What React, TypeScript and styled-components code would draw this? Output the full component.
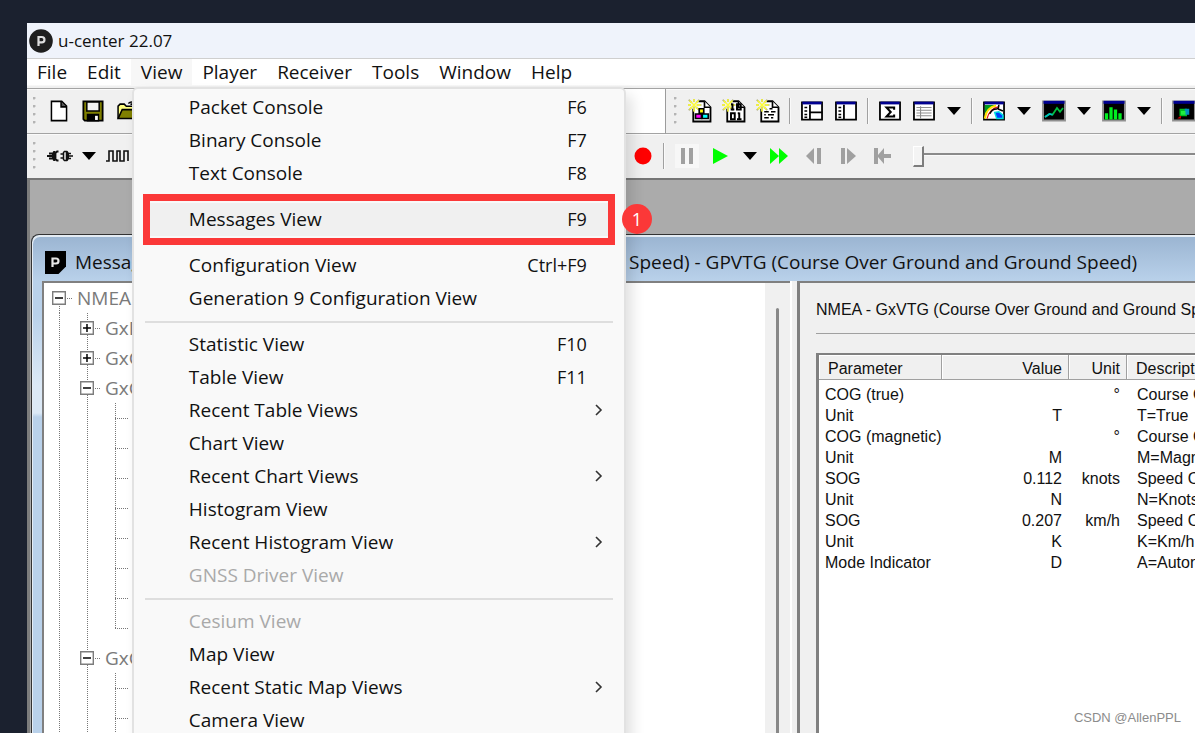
import React from "react";
import styled, { createGlobalStyle } from "styled-components";

const uiFont = `"Open Sans", "Noto Sans", "Liberation Sans", sans-serif`;
const dialogFont = `"Liberation Sans", Arial, sans-serif`;

const GlobalStyle = createGlobalStyle`
  *, *::before, *::after { box-sizing: border-box; }
  body { margin: 0; background: #1b212f; color: #111; font-family: ${uiFont}; }
  button { margin: 0; padding: 0; border: 0; background: none; color: inherit; font: inherit; }
  svg { display: block; flex: none; }
`;

const Desktop = styled.main`
  position: relative;
  display: flex;
  height: 100vh;
  padding: 23px 0 0 27px;
  overflow: hidden;
  background: #1b212f;
`;

const AppWindow = styled.section`
  display: flex;
  flex: 1;
  flex-direction: column;
  min-width: 0;
  background: #f0f0f0;
`;

const TitleBar = styled.header`
  display: flex;
  flex: none;
  align-items: center;
  gap: 5px;
  height: 36px;
  padding-left: 2px;
  border-bottom: 1px solid #cfcfcf;
  background: #eff3fb;
`;

const AppTitle = styled.h1`
  margin: 0;
  font-size: 17px;
  font-weight: 400;
  line-height: 24px;
`;

const MenuBar = styled.nav`
  display: flex;
  flex: none;
  height: 30px;
  border-bottom: 1px solid #a3a3a3;
  background: linear-gradient(#fff 26px, #f0f0f0 27px);
`;

const MenuSlot = styled.div`
  position: relative;
`;

const MenuButton = styled.button<{ $open?: boolean }>`
  height: 27px;
  padding: 0 10px 2px;
  background: ${(p) => (p.$open ? "#f7f7f7" : "transparent")};
  font-size: 19px;
  line-height: 24px;
  white-space: nowrap;
`;

const Dropdown = styled.div`
  position: absolute;
  z-index: 5;
  top: 28px;
  left: 1px;
  width: 494px;
  padding: 2px 11px 8px;
  border: 2px solid #e2e2e2;
  border-radius: 6px;
  background: #f9f9f9;
  box-shadow: 6px 8px 14px rgba(0, 0, 0, 0.12);
`;

const MenuItem = styled.button<{ $active?: boolean }>`
  position: relative;
  display: grid;
  grid-template-columns: 1fr auto 26px;
  align-items: center;
  width: 100%;
  height: 33px;
  padding-left: 44px;
  padding-bottom: 2px;
  border-radius: 4px;
  background: ${(p) => (p.$active ? "#f0f0f0" : "transparent")};
  font-size: 19px;
  line-height: 24px;
  text-align: left;
  white-space: nowrap;

  &:disabled { color: #a9a9a9; }
`;

const Shortcut = styled.span`
  font-size: 18px;
`;

const ChevronCell = styled.span`
  display: flex;
  grid-column: 3;
  justify-content: center;
`;

const MenuSeparator = styled.hr`
  height: 2px;
  margin: 6px 0 5px;
  border: 0;
  background: #dedede;
`;

const Callout = styled.span`
  position: absolute;
  inset: -9px -2px;
  border: 7px solid #fb3838;
`;

const CalloutNumber = styled.span`
  position: absolute;
  top: 1px;
  right: -39px;
  width: 30px;
  height: 30px;
  border-radius: 50%;
  background: #fb3838;
  color: #fff;
  font-size: 18px;
  line-height: 30px;
  text-align: center;
`;

const ToolRow = styled.div`
  display: flex;
  flex: none;
  height: 45px;
  background: #f0f0f0;
  box-shadow: inset 0 1px 0 #fafafa;

  & + & { height: 44px; }
`;

const ToolBand = styled.div<{ $width?: number; $divided?: boolean }>`
  display: flex;
  flex: ${(p) => (p.$width ? `0 0 ${p.$width}px` : "1 0 auto")};
  align-items: center;
  border-left: ${(p) => (p.$divided ? "1px solid #9c9c9c" : "0")};
  border-bottom: 1px solid #a3a3a3;

  ${ToolRow} + ${ToolRow} & { border-bottom: 0; }
`;

const Grip = styled.span`
  flex: none;
  width: 3px;
  height: 28px;
  margin: 0 12px 0 6px;
  background: radial-gradient(circle at 1px 1px, #b4b4b4 1px, transparent 2px) 0 0 / 3px 8px;
`;

const BandGrip = styled(Grip)`
  margin: 0 12px 0 8px;
`;

const ToolGroup = styled.div<{ $gap: number }>`
  display: flex;
  flex: none;
  align-items: center;
  gap: ${(p) => p.$gap}px;
`;

const ToolButton = styled.button<{ $width?: number; $dither?: boolean }>`
  display: flex;
  flex: none;
  align-items: center;
  justify-content: center;
  width: ${(p) => p.$width ?? 22}px;
  height: 24px;
  background: ${(p) => (p.$dither ? "#f7f7f7" : "transparent")};
`;

const ToolDivider = styled.span`
  flex: none;
  width: 2px;
  height: 26px;
  margin: 0 10px;
  border-left: 1px solid #a0a0a0;
  border-right: 1px solid #fafafa;
`;

const ComboArea = styled.div`
  flex: 1;
  align-self: stretch;
  margin-left: 12px;
  background: #fff;
`;

const Spacer = styled.div`
  flex: 1;
`;

const Position = styled.input`
  flex: 1;
  min-width: 120px;
  height: 22px;
  margin: 0 0 0 20px;
  appearance: none;
  background: linear-gradient(transparent 8px, #8a8a8a 8px, #8a8a8a 10px, #fafafa 10px, #fafafa 11px, transparent 11px);

  &::-webkit-slider-thumb {
    appearance: none;
    width: 11px;
    height: 21px;
    border: 1px solid #fff;
    border-right: 2px solid #7d7d7d;
    border-bottom: 2px solid #7d7d7d;
    background: #f4f4f4;
  }
`;

const Workspace = styled.div`
  display: flex;
  flex: 1;
  min-height: 0;
  padding-top: 54px;
  padding-left: 1px;
  border-top: 2px solid #757575;
  border-left: 3px solid #7c7c7c;
  background: #ababab;
`;

const ChildWindow = styled.section`
  display: flex;
  flex: 1;
  flex-direction: column;
  min-width: 0;
  padding: 0 0 0 10px;
  border: 0 solid #333;
  border-width: 1px 0 0 1px;
  border-top-left-radius: 8px;
  background: linear-gradient(#9ab4d1 0, #b9d1ea 46px, #b9d1ea 80px, #dce9f6 150px, #dce9f6 178px, #b9d1ea 182px);
  box-shadow: inset 1px 2px 0 #e4ecf4;
`;

const ChildTitleBar = styled.header`
  display: flex;
  flex: none;
  align-items: center;
  gap: 9px;
  height: 46px;
  padding: 8px 0 0 3px;
`;

const ChildTitle = styled.h2`
  display: flex;
  gap: 17px;
  margin: 0;
  font-size: 19px;
  font-weight: 400;
  line-height: 24px;
  white-space: nowrap;
`;

const Split = styled.div`
  display: flex;
  flex: 1;
  min-height: 0;
  background: #f0f0f0;
`;

const TreePane = styled.div`
  display: flex;
  flex: 0 0 748px;
  border-top: 2px solid #808080;
  border-left: 2px solid #808080;
  background: #fff;
  overflow: hidden;
`;

const Tree = styled.ul`
  flex: 1;
  margin: 0;
  padding: 0 0 0 1px;
  list-style: none;
`;

const TreeRow = styled.li`
  display: flex;
  align-items: center;
  height: 30px;
  color: #7a7a7a;
  font-size: 19px;
  line-height: 24px;
`;

const Guide = styled.span<{ $from?: string; $to?: string; $tick?: boolean }>`
  position: relative;
  display: flex;
  align-items: center;
  justify-content: center;
  width: 28px;
  height: 30px;
  margin-right: ${(p) => (p.$tick ? "4px" : "0")};

  &::before {
    content: "";
    position: absolute;
    top: ${(p) => p.$from ?? "0"};
    bottom: ${(p) => p.$to ?? "0"};
    left: 14px;
    width: 1px;
    background: repeating-linear-gradient(#777 0 1px, transparent 1px 2px);
  }

  &::after {
    content: "";
    position: absolute;
    top: 15px;
    left: 14px;
    right: 0;
    height: 1px;
    background: ${(p) =>
      p.$tick ? "repeating-linear-gradient(90deg, #777 0 1px, transparent 1px 2px)" : "none"};
  }
`;

const Toggle = styled.button`
  position: relative;
  z-index: 1;
`;

const ScrollTrack = styled.div`
  width: 25px;
  padding: 25px 11px 0;
  background: #f0f0f0;
`;

const ScrollThumb = styled.div`
  width: 3px;
  height: 100%;
  border-radius: 2px 2px 0 0;
  background: #888;
`;

const Splitter = styled.div`
  flex: none;
  width: 7px;
  border-left: 2px solid #fff;
`;

const DetailPane = styled.article`
  flex: 1;
  min-width: 0;
  display: flex;
  flex-direction: column;
  padding: 15px 0 0 16px;
  border-top: 2px solid #808080;
  border-left: 3px solid #808080;
  overflow: hidden;
  font-family: ${dialogFont};
`;

const DetailHeading = styled.h3`
  margin: 0;
  padding-bottom: 11px;
  border-bottom: 1px solid #a0a0a0;
  font-size: 16px;
  font-weight: 400;
  line-height: 24px;
  white-space: nowrap;
`;

const ListView = styled.div`
  flex: 1;
  margin-top: 19px;
  border-top: 2px solid #808080;
  border-left: 3px solid #808080;
  background: #fff;
  overflow: hidden;
`;

const DataTable = styled.table`
  width: 520px;
  border-collapse: separate;
  border-spacing: 0;
  table-layout: fixed;
  font-size: 16px;
  line-height: 21px;

  th {
    height: 25px;
    padding: 2px 6px 0 9px;
    border-right: 1px solid #a0a0a0;
    border-bottom: 1px solid #a0a0a0;
    background: #f0f0f0;
    box-shadow: inset 1px 1px 0 #fff;
    font-weight: 400;
    white-space: nowrap;
  }
  td { padding: 0 7px 0 6px; white-space: nowrap; }
  td:last-child { padding-left: 10px; }
  tbody::before { content: ""; display: block; height: 4px; }
`;

const HeadCell = styled.th<{ $end?: boolean }>`
  text-align: ${(p) => (p.$end ? "right" : "left")};
`;

const DataCell = styled.td<{ $end?: boolean }>`
  text-align: ${(p) => (p.$end ? "right" : "left")};
`;

const Watermark = styled.span`
  position: absolute;
  right: 14px;
  bottom: 6px;
  color: #8c8c8c;
  font-family: ${dialogFont};
  font-size: 13px;
  line-height: 18px;
`;

/* ---------- icons, drawn on a 16 unit pixel grid ---------- */

const Pix = ({ size = 22, children }: { size?: number; children: React.ReactNode }) => (
  <svg width={size} height={size} viewBox="0 0 16 16" fill="none" stroke="#000" strokeWidth="1.1" aria-hidden="true">
    {children}
  </svg>
);

const NewIcon = () => (
  <Pix>
    <path d="M2.500 1h7.500l3.500 3.500v10.500h-11z" fill="#fff" strokeWidth="1.100" />
    <path d="M9.500 1v4h4" fill="#555" />
  </Pix>
);

const SaveIcon = () => (
  <Pix>
    <path d="M1 1h14v14H2l-1-1z" fill="#808000" strokeWidth="1.300" />
    <path d="M3.500 1.500h9v6.500h-9z" fill="#f2f2f2" />
    <path d="M4 10.500h8V15H4z" fill="#000" />
    <path d="M9.500 11.500h2V14.500h-2z" fill="#fff" stroke="none" />
  </Pix>
);

const OpenIcon = () => (
  <Pix>
    <path d="M1.500 13.500v-9l1.500-1.500h3l1.500 1.500h5v2.500" fill="#ffff80" />
    <path d="M1.500 13.500l3-6.500h11l-3.500 6.500z" fill="#808000" />
    <path d="M9 2.500c1.500-1.500 3-1.500 4.500 0M13.500 0v3h-3" />
  </Pix>
);

const PlugIcon = () => (
  <svg width="26" height="16" viewBox="0 0 26 16" fill="none" stroke="#111" strokeWidth="1.800" aria-hidden="true">
    <path d="M0 8h5M2 5.500h3M2 10.500h3M11.500 3.500H10L8.500 5v6l1.500 1.500h1.500" />
    <path d="M8.500 3h-2L5 5v6l1.500 2h2z" fill="#111" stroke="none" />
    <path d="M16.500 4.500l1-1h2v9h-2l-1-1zM13.500 6h3M13.500 10h3M22 5.500h2M22 10.500h2M22 8h4" strokeWidth="1.500" />
    <path d="M19 3h1.500L22 5v6l-1.500 2H19z" fill="#111" stroke="none" />
  </svg>
);

const WaveIcon = () => (
  <svg width="24" height="14" viewBox="0 0 24 14" fill="none" stroke="#111" strokeWidth="1.600" aria-hidden="true">
    <path d="M0 12h3V2h4v10h4V2h3v10h4V2h4v10" />
  </svg>
);

const ArrowDown = () => (
  <svg width="14" height="8" viewBox="0 0 14 8" aria-hidden="true">
    <path d="M0 0h14L7 8z" fill="#000" />
  </svg>
);

const SparkPage = ({ children }: { children: React.ReactNode }) => (
  <Pix size={24}>
    <path d="M3.500 1.500h7.500l4 4v9.500h-11.500z" fill="#fff" strokeWidth="1.200" />
    <path d="M11 1.500v4h4" fill="#fff" />
    <path d="M-.5-.5h7.500v7h-7.500z" fill="#f0f0f0" stroke="none" />
    <path d="M4 0v2M4 5v3M0 4h2M6 4h3M0.500 0.500l2 2M7.500 0.500l-2 2M0.500 7.500l2-2M7.500 7.500l-2-2" stroke="#a8a878" strokeWidth="1.100" />
    <path d="M4 0v2M4 5.500v3M0 4h2M5.500 4h3M1 1l6 6M7 1L1 7" stroke="#ffff30" strokeWidth=".9" />
    {children}
  </Pix>
);

const PacketIcon = () => (
  <SparkPage>
    <path d="M7.500 6.500h3v3h-3z" fill="#ffff00" />
    <path d="M5 10h4v3H5z" fill="#ff00ff" />
    <path d="M9.500 10h4v3h-4z" fill="#00ffff" />
  </SparkPage>
);

const BinaryIcon = () => (
  <SparkPage>
    <path d="M7 3v4M6 3.500h1M5.800 7h2.400M10 3.500h2.500v3.500H10zM6 9.500h2.500v4H6zM11.500 9v4.500M10.500 9.500h1M10 13.500h3" strokeWidth="1.300" />
  </SparkPage>
);

const TextIcon = () => (
  <SparkPage>
    <path d="M5.500 8.500h3M10 8.500h3M5.500 10.500h1M8 10.500h4M5.500 12.500h3M10 12.500h1.500M9 6.500h2" />
  </SparkPage>
);

const PaneFrame = ({ size, fill = "#fff", frame = "#000", children }: { size?: number; fill?: string; frame?: string; children?: React.ReactNode }) => (
  <Pix size={size}>
    <path d="M.7 1.700h14.600v12.600H.7z" fill={fill} stroke={frame} strokeWidth="1.300" />
    <path d="M1 1.200h14v2H1z" fill="#000090" stroke="none" />
    {children}
  </Pix>
);

const PanesIcon = () => (
  <PaneFrame>
    <path d="M6.500 3.500v11M6.500 9h9" strokeWidth="1.300" />
    <path d="M2.500 5.500h2M2.500 8h2M2.500 10.500h2M2.500 12.500h2" />
  </PaneFrame>
);

const SidePaneIcon = () => (
  <PaneFrame>
    <path d="M6.500 3.500v11" strokeWidth="1.300" />
    <path d="M2.500 5.500h2M2.500 8h2M2.500 10.500h2M2.500 12.500h2" />
  </PaneFrame>
);

const SigmaIcon = () => (
  <PaneFrame>
    <path d="M11 7V5.500H5.500L8.500 8.700 5.500 12H11v-1.500" strokeWidth="1.500" />
  </PaneFrame>
);

const TableIcon = () => (
  <PaneFrame>
    <path d="M2.500 5.500h11M2.500 7.500h11M2.500 9.500h11M2.500 11.500h11M5.500 4.500v9" stroke="#8f8f8f" strokeWidth=".8" />
  </PaneFrame>
);

const MapIcon = () => (
  <PaneFrame>
    <path d="M1.300 3.600h7L1.300 10z" fill="#009a20" stroke="none" />
    <path d="M1.300 13.600C2 8 5 5 9.500 4" stroke="#ffe000" strokeWidth="1.600" />
    <path d="M3 13.600C4 9 6.500 6 11 5" stroke="#e01010" strokeWidth=".9" />
    <path d="M5 10c1-2.500 3-3.500 5-3.500 1 0 1.500-1 1.500-3M11 6.500l3.500 1.500" />
    <path d="M8.500 9l3-.5 3 2.500v2.500H10z" fill="#0040ff" stroke="#00e0e0" />
  </PaneFrame>
);

const ChartIcon = () => (
  <PaneFrame size={24} fill="#000" frame="#909090">
    <path d="M2 12l3-2 2 .5L10 6l2 2.500L14 6" stroke="#00c040" strokeWidth="1.200" />
    <path d="M2 12l3-2 2 .5" stroke="#00c0c0" strokeWidth="1.200" />
  </PaneFrame>
);

const HistogramIcon = () => (
  <PaneFrame size={24} fill="#000" frame="#909090">
    <path d="M3 13.600V9.500M6 13.600V5.500M9 13.600V7M12 13.600V9.500" stroke="#00f020" strokeWidth="2.200" />
  </PaneFrame>
);

const SkyIcon = () => (
  <PaneFrame size={24} fill="#000" frame="#909090">
    <path d="M5 6.500h5v5H5z" fill="#00c020" stroke="none" />
    <path d="M8.500 6.500h3v4h-3z" fill="#0090c0" stroke="none" />
    <path d="M6 8h3v2.500H6z" fill="#20f040" stroke="none" />
    <path d="M3.500 13h2.500v-2z" fill="#d00000" stroke="none" />
  </PaneFrame>
);

const Glyph = ({ d, fill, circle }: { d?: string; fill: string; circle?: boolean }) => (
  <svg width="20" height="20" viewBox="0 0 20 20" fill={fill} aria-hidden="true">
    {circle ? <circle cx="10" cy="10" r="8.500" /> : <path d={d} />}
  </svg>
);

const Chevron = () => (
  <svg width="10" height="14" viewBox="0 0 10 14" fill="none" stroke="#333" strokeWidth="1.600" aria-hidden="true">
    <path d="M1 2l5 5-5 5" />
  </svg>
);

const AppLogo = () => (
  <svg width="24" height="24" viewBox="0 0 24 24" aria-hidden="true">
    <circle cx="12" cy="12" r="11.800" fill="#1f1f1f" />
    <path d="M9.500 17V8h3.300a2.600 2.600 0 0 1 0 5.300H9.500" fill="none" stroke="#ddd" strokeWidth="2.200" />
  </svg>
);

const ChildLogo = () => (
  <svg width="21" height="23" viewBox="0 0 21 23" aria-hidden="true">
    <path d="M0 0h21v15.500L13.500 23H0z" fill="#000" />
    <path d="M7.500 16V7.500h3.500a2.400 2.400 0 0 1 0 5H7.500" fill="none" stroke="#e6e6e6" strokeWidth="2.200" />
  </svg>
);

const ToggleBox = ({ open }: { open: boolean }) => (
  <svg width="14" height="14" viewBox="0 0 14 14" fill="#fff" aria-hidden="true">
    <path d="M.7.7h12.600v12.600H.7z" stroke="#7c7c7c" strokeWidth="1.400" />
    <path d={open ? "M3 7h8" : "M3 7h8M7 3v8"} stroke="#000" strokeWidth="1.500" />
  </svg>
);

/* ---------- data ---------- */

type Entry = { label: string; keys?: string; sub?: boolean; disabled?: boolean; marked?: boolean } | null;

const viewMenu: Entry[] = [
  { label: "Packet Console", keys: "F6" },
  { label: "Binary Console", keys: "F7" },
  { label: "Text Console", keys: "F8" },
  null,
  { label: "Messages View", keys: "F9", marked: true },
  null,
  { label: "Configuration View", keys: "Ctrl+F9" },
  { label: "Generation 9 Configuration View" },
  null,
  { label: "Statistic View", keys: "F10" },
  { label: "Table View", keys: "F11" },
  { label: "Recent Table Views", sub: true },
  { label: "Chart View" },
  { label: "Recent Chart Views", sub: true },
  { label: "Histogram View" },
  { label: "Recent Histogram View", sub: true },
  { label: "GNSS Driver View", disabled: true },
  null,
  { label: "Cesium View", disabled: true },
  { label: "Map View" },
  { label: "Recent Static Map Views", sub: true },
  { label: "Camera View" },
];

const menus = ["File", "Edit", "View", "Player", "Receiver", "Tools", "Window", "Help"];

const treeNodes = [
  { label: "GxDTM", open: false, leaves: 0 },
  { label: "GxGBS", open: false, leaves: 0 },
  { label: "GxGGA", open: true, leaves: 8 },
  { label: "GxGLL", open: true, leaves: 4 },
];

const fields = [
  ["COG (true)", "", "°", "Course Over Ground (true)"],
  ["Unit", "T", "", "T=True"],
  ["COG (magnetic)", "", "°", "Course Over Ground (magnetic)"],
  ["Unit", "M", "", "M=Magnetic"],
  ["SOG", "0.112", "knots", "Speed Over Ground"],
  ["Unit", "N", "", "N=Knots"],
  ["SOG", "0.207", "km/h", "Speed Over Ground"],
  ["Unit", "K", "", "K=Km/h"],
  ["Mode Indicator", "D", "", "A=Autonomous"],
];

/* ---------- parts ---------- */

const ViewDropdown = () => (
  <Dropdown role="menu" aria-label="View">
    {viewMenu.map((entry, i) =>
      entry === null ? (
        <MenuSeparator key={i} />
      ) : (
        <MenuItem key={i} role="menuitem" disabled={entry.disabled} $active={entry.marked}>
          <span>{entry.label}</span>
          {entry.keys && <Shortcut>{entry.keys}</Shortcut>}
          {entry.sub && (
            <ChevronCell>
              <Chevron />
            </ChevronCell>
          )}
          {entry.marked && (
            <>
              <Callout />
              <CalloutNumber>1</CalloutNumber>
            </>
          )}
        </MenuItem>
      ),
    )}
  </Dropdown>
);

const Tool = ({ name, width, dither, children }: { name: string; width?: number; dither?: boolean; children: React.ReactNode }) => (
  <ToolButton aria-label={name} $width={width} $dither={dither}>
    {children}
  </ToolButton>
);

const SplitTool = ({ name, children }: { name: string; children: React.ReactNode }) => (
  <ToolGroup $gap={12}>
    <Tool name={name}>{children}</Tool>
    <Tool name={`${name} options`} width={14}>
      <ArrowDown />
    </Tool>
  </ToolGroup>
);

const Toolbars = () => (
  <>
    <ToolRow>
      <ToolBand $width={638}>
        <Grip />
        <ToolGroup $gap={12}>
          <Tool name="New"><NewIcon /></Tool>
          <Tool name="Save"><SaveIcon /></Tool>
          <Tool name="Open"><OpenIcon /></Tool>
        </ToolGroup>
        <ComboArea />
      </ToolBand>
      <ToolBand $divided>
        <BandGrip />
        <ToolGroup $gap={12}>
          <Tool name="Packet Console"><PacketIcon /></Tool>
          <Tool name="Binary Console"><BinaryIcon /></Tool>
          <Tool name="Text Console"><TextIcon /></Tool>
        </ToolGroup>
        <ToolDivider />
        <ToolGroup $gap={12}>
          <Tool name="Messages View"><PanesIcon /></Tool>
          <Tool name="Configuration View"><SidePaneIcon /></Tool>
        </ToolGroup>
        <ToolDivider />
        <ToolGroup $gap={12}>
          <Tool name="Statistic View"><SigmaIcon /></Tool>
          <SplitTool name="Table View"><TableIcon /></SplitTool>
        </ToolGroup>
        <ToolDivider />
        <ToolGroup $gap={12}>
          <SplitTool name="Map View"><MapIcon /></SplitTool>
          <SplitTool name="Chart View"><ChartIcon /></SplitTool>
          <SplitTool name="Histogram View"><HistogramIcon /></SplitTool>
        </ToolGroup>
        <ToolDivider />
        <Tool name="Sky View"><SkyIcon /></Tool>
      </ToolBand>
    </ToolRow>
    <ToolRow>
      <ToolBand $width={606}>
        <Grip />
        <ToolGroup $gap={10}>
          <Tool name="Connect" width={24}><PlugIcon /></Tool>
          <Tool name="Port" width={14}><ArrowDown /></Tool>
          <Tool name="Baudrate" width={24}><WaveIcon /></Tool>
        </ToolGroup>
        <Spacer />
      </ToolBand>
      <ToolBand>
        <Tool name="Record" width={20}><Glyph circle fill="#ff0000" /></Tool>
        <ToolDivider />
        <ToolGroup $gap={10}>
          <Tool name="Pause" width={24} dither><Glyph d="M4 2h4v16H4zM12 2h4v16h-4z" fill="#a0a0a0" /></Tool>
          <Tool name="Play" width={24}><Glyph d="M2 2l15 8-15 8z" fill="#00ff00" /></Tool>
          <Tool name="Play options" width={14}><ArrowDown /></Tool>
          <Tool name="Fast forward" width={24}><Glyph d="M1 2l9 8-9 8zM10 2l9 8-9 8z" fill="#00ff00" /></Tool>
          <Tool name="Step back" width={24}><Glyph d="M11 2v16l-8-8zM14 2h4v16h-4z" fill="#a0a0a0" /></Tool>
          <Tool name="Step forward" width={24}><Glyph d="M4 2h4v16H4zM10 2l9 8-9 8z" fill="#a0a0a0" /></Tool>
          <Tool name="Rewind" width={24}><Glyph d="M3 2h4v7l6-7v6h7v4h-7v6l-6-7v7H3z" fill="#a0a0a0" /></Tool>
        </ToolGroup>
        <Position type="range" defaultValue={0} aria-label="Playback position" />
      </ToolBand>
    </ToolRow>
  </>
);

const MessageTree = () => (
  <Tree>
    <TreeRow>
      <Guide $from="15px" $tick>
        <Toggle aria-label="Collapse NMEA"><ToggleBox open /></Toggle>
      </Guide>
      NMEA
    </TreeRow>
    {treeNodes.map((node) => (
      <React.Fragment key={node.label}>
        <TreeRow>
          <Guide />
          <Guide $tick>
            <Toggle aria-label={`Toggle ${node.label}`}><ToggleBox open={node.open} /></Toggle>
          </Guide>
          {node.label}
        </TreeRow>
        {Array.from({ length: node.leaves }, (_, i) => (
          <TreeRow key={i}>
            <Guide />
            <Guide />
            <Guide $tick $to={i === 7 ? "14px" : "0"} />
          </TreeRow>
        ))}
      </React.Fragment>
    ))}
  </Tree>
);

const MessageDetail = () => (
  <DetailPane>
    <DetailHeading>NMEA - GxVTG (Course Over Ground and Ground Speed)</DetailHeading>
    <ListView>
      <DataTable>
        <colgroup>
          <col width="123" />
          <col width="127" />
          <col width="58" />
          <col />
        </colgroup>
        <thead>
          <tr>
            <HeadCell>Parameter</HeadCell>
            <HeadCell $end>Value</HeadCell>
            <HeadCell $end>Unit</HeadCell>
            <HeadCell>Description</HeadCell>
          </tr>
        </thead>
        <tbody>
          {fields.map(([name, value, unit, description], i) => (
            <tr key={i}>
              <DataCell>{name}</DataCell>
              <DataCell $end>{value}</DataCell>
              <DataCell $end>{unit}</DataCell>
              <DataCell>{description}</DataCell>
            </tr>
          ))}
        </tbody>
      </DataTable>
    </ListView>
  </DetailPane>
);

export default function App() {
  return (
    <>
      <GlobalStyle />
      <Desktop>
        <AppWindow>
          <TitleBar>
            <AppLogo />
            <AppTitle>u-center 22.07</AppTitle>
          </TitleBar>
          <MenuBar aria-label="Main menu">
            {menus.map((name) => (
              <MenuSlot key={name}>
                <MenuButton $open={name === "View"}>{name}</MenuButton>
                {name === "View" && <ViewDropdown />}
              </MenuSlot>
            ))}
          </MenuBar>
          <Toolbars />
          <Workspace>
            <ChildWindow>
              <ChildTitleBar>
                <ChildLogo />
                <ChildTitle>
                  <span>Messages - NMEA -</span>
                  <span>
                    GxVTG (Course Over Ground and Ground Speed) - GPVTG (Course Over Ground and Ground Speed)
                  </span>
                </ChildTitle>
              </ChildTitleBar>
              <Split>
                <TreePane>
                  <MessageTree />
                  <ScrollTrack>
                    <ScrollThumb />
                  </ScrollTrack>
                </TreePane>
                <Splitter />
                <MessageDetail />
              </Split>
            </ChildWindow>
          </Workspace>
        </AppWindow>
        <Watermark>CSDN @AllenPPL</Watermark>
      </Desktop>
    </>
  );
}
